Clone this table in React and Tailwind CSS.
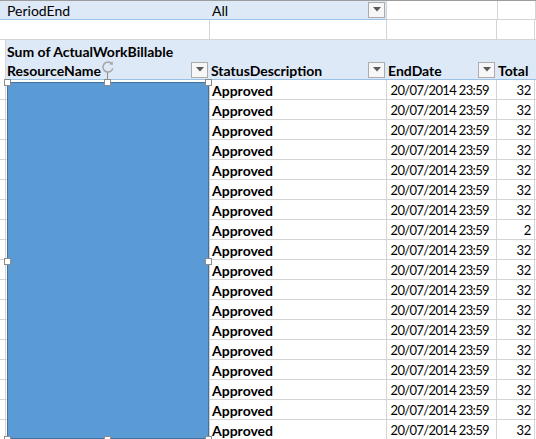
import { useMemo } from "react";

const GRID = "border-[#d4d4d4]";

const DropBtn = () => (
  <div className="w-[17px] h-[16px] border border-[#ababab] bg-[#f7f7f7] flex items-center justify-center shrink-0">
    <svg width="8" height="5" viewBox="0 0 8 5">
      <path d="M0 0 H8 L4 4.5 Z" fill="#595959" />
    </svg>
  </div>
);

const Handle = ({ x, y }) => (
  <div
    className="absolute w-[7px] h-[7px] bg-white border border-[#8c8c8c]"
    style={{ left: x - 3, top: y - 3 }}
  />
);

const App = () => {
  const rows = useMemo(
    () => Array.from({ length: 18 }, (_, i) => (i === 7 ? "2" : "32")),
    []
  );

  return (
    <div
      className="relative w-[536px] h-[439px] overflow-hidden bg-white text-black text-[14px] leading-none whitespace-nowrap border-t border-[#9c9c9c]"
      style={{ fontFamily: "Lato, 'Noto Sans', sans-serif" }}
    >
      {/* row 1: report filter */}
      <div className="flex h-[20px] -mt-px">
        <div className="flex w-[386px] bg-[#dde9f6] border-b border-[#9bc2e6]">
          <div className="w-[210px] pl-[7px] pt-[2px] flex items-center">PeriodEnd</div>
          <div className="flex-1 pl-[2px] pr-px flex items-center justify-between">
            <span className="pt-[2px]">All</span>
            <DropBtn />
          </div>
        </div>
        <div className={`w-[111px] border-b border-l ${GRID}`} />
        <div className={`w-[38px] border-b border-l ${GRID}`} />
        <div className={`flex-1 border-b border-l ${GRID}`} />
      </div>

      {/* row 2: blank */}
      <div className={`flex h-[20px] border-b ${GRID}`}>
        <div className={`w-[210px] border-r ${GRID}`} />
        <div className={`w-[177px] border-r ${GRID}`} />
        <div className={`w-[110px] border-r ${GRID}`} />
        <div className={`w-[38px] border-r ${GRID}`} />
      </div>

      {/* row 3 + 4: pivot header */}
      <div className="flex">
        <div className="w-[6px] border-r border-[#d4d4d4]" />
        <div className="flex-1 bg-[#dde9f6] border-b border-[#9bc2e6] font-bold">
          <div className="h-[20px] pl-px pt-[3px] flex items-center">Sum of ActualWorkBillable</div>
          <div className="h-[19px] flex items-center">
            <div className="w-[203px] pl-px pr-px flex items-center justify-between">
              <span className="pt-[2px]">ResourceName</span>
              <DropBtn />
            </div>
            <div className="w-[177px] pl-[2px] pr-px flex items-center justify-between">
              <span className="pt-[2px]">StatusDescription</span>
              <DropBtn />
            </div>
            <div className="w-[110px] pl-[2px] pr-px flex items-center justify-between">
              <span className="pt-[2px]">EndDate</span>
              <DropBtn />
            </div>
            <div className="pl-[2px] pt-[2px]">Total</div>
          </div>
        </div>
      </div>

      {/* data rows */}
      {rows.map((v, i) => (
        <div key={i} className={`flex h-[20px] border-b ${GRID}`}>
          <div className={`w-[6px] border-r ${GRID}`} />
          <div className={`w-[204px] border-r ${GRID}`} />
          <div className={`w-[177px] pl-[2px] pt-[2px] border-r ${GRID} flex items-center font-bold`}>
            Approved
          </div>
          <div className={`w-[110px] pr-[7px] pt-[2px] border-r ${GRID} flex items-center justify-end text-[13px] tracking-[-0.65px]`}>
            20/07/2014 23:59
          </div>
          <div className={`w-[38px] pr-[3px] pt-[2px] border-r ${GRID} flex items-center justify-end text-[13px] tracking-[-0.3px]`}>
            {v}
          </div>
        </div>
      ))}

      {/* selected shape over the ResourceName column */}
      <div className="absolute left-[7px] top-[81px] w-[202px] h-[357px] bg-[#5b9bd5] border border-[#41719c]" />
      <div className="absolute left-[107px] top-[71px] w-px h-[10px] bg-[#8c8c8c]" />
      <svg className="absolute left-[101px] top-[59px]" width="14" height="14" viewBox="0 0 14 14">
        <path
          d="M10.8 3.8 A5 5 0 1 0 11.8 8.4"
          fill="none"
          stroke="#a6a6a6"
          strokeWidth="1.5"
        />
        <path d="M8.4 4.4 L12 4.8 L11.6 1.2 Z" fill="#a6a6a6" />
      </svg>
      <Handle x={7} y={81} />
      <Handle x={107} y={81} />
      <Handle x={208} y={81} />
      <Handle x={7} y={260} />
      <Handle x={208} y={260} />
      <Handle x={7} y={438} />
      <Handle x={107} y={438} />
      <Handle x={208} y={438} />
    </div>
  );
};

export default App;
